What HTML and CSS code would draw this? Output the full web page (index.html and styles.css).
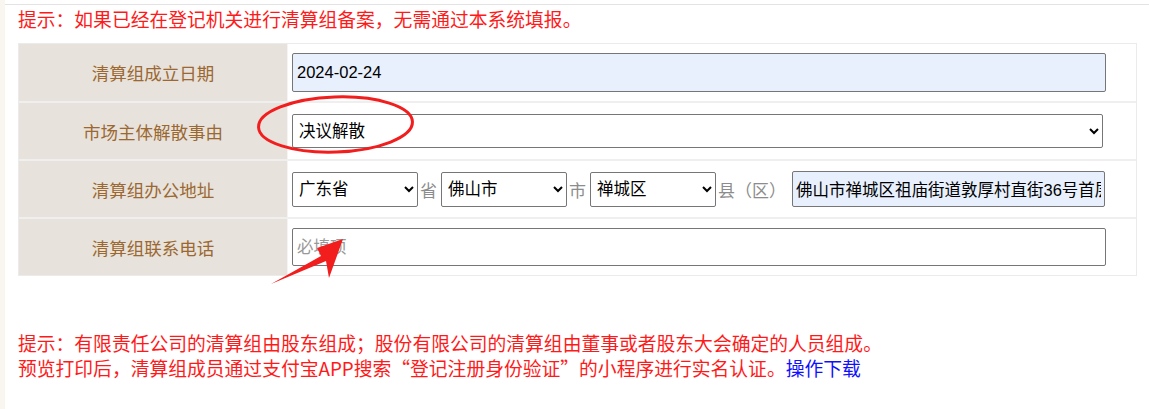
FILE: index.html
```html
<!DOCTYPE html>
<html lang="zh-CN">
<head>
<meta charset="utf-8">
<title>清算组备案</title>
<link rel="stylesheet" href="styles.css">
</head>
<body>
<div class="page">
  <div class="strip"></div>
  <div class="main">
    <p class="tip">提示：如果已经在登记机关进行清算组备案，无需通过本系统填报。</p>
    <table class="form">
      <tr>
        <td class="label">清算组成立日期</td>
        <td class="value"><input class="field filled wide" type="text" value="2024-02-24"></td>
      </tr>
      <tr class="sep">
        <td class="label">市场主体解散事由</td>
        <td class="value"><select class="field sel-wide"><option>决议解散</option></select></td>
      </tr>
      <tr class="sep">
        <td class="label">清算组办公地址</td>
        <td class="value">
          <div class="addr">
            <select class="field sel-small"><option>广东省</option></select>
            <span class="unit">省</span>
            <select class="field sel-small"><option>佛山市</option></select>
            <span class="unit">市</span>
            <select class="field sel-small"><option>禅城区</option></select>
            <span class="unit county">县（区）</span>
            <input class="field filled addr-input" type="text" value="佛山市禅城区祖庙街道敦厚村直街36号首层">
          </div>
        </td>
      </tr>
      <tr class="sep">
        <td class="label">清算组联系电话</td>
        <td class="value"><input class="field wide phone" type="text" placeholder="必填项"></td>
      </tr>
    </table>
    <div class="notes">
      <p>提示：有限责任公司的清算组由股东组成；股份有限公司的清算组由董事或者股东大会确定的人员组成。</p>
      <p>预览打印后，清算组成员通过支付宝APP搜索“登记注册身份验证”的小程序进行实名认证。<a class="dl" href="#">操作下载</a></p>
    </div>
  </div>
  <svg class="marks" width="1149" height="409" viewBox="0 0 1149 409">
    <ellipse cx="335.5" cy="124.5" rx="77" ry="27.5" transform="rotate(-2 335.5 124.5)" fill="none" stroke="#f21d1d" stroke-width="3"/>
    <polygon points="271,284 321,256 317,248 343,239 329,278 326,261" fill="#f21d1d"/>
  </svg>
</div>
</body>
</html>
```
FILE: styles.css
```css
html, body {
  margin: 0;
  padding: 0;
  background: #ffffff;
}
body {
  font-family: "Liberation Sans", "Noto Sans CJK SC", sans-serif;
}
.page {
  position: relative;
  display: flex;
  width: 1149px;
  height: 409px;
  overflow: hidden;
}
.strip {
  width: 5px;
  flex: none;
  background: #f9f6ef;
}
.main {
  flex: 1;
  margin-top: 4px;
  border-top: 1px solid #e3e3e3;
  padding-left: 13px;
}
.tip {
  margin: 0;
  padding-top: 1px;
  font-size: 18.8px;
  line-height: 26px;
  color: #ff1a1a;
  font-family: "Noto Sans CJK SC", sans-serif;
}
.form {
  margin-top: 11px;
  width: 1119px;
  border: 1px solid #ebebeb;
  border-collapse: separate;
  border-spacing: 0;
}
.form td {
  height: 56px;
  padding: 0;
  vertical-align: middle;
}
.form tr:first-child td {
  height: 57px;
}
.form .sep td {
  border-top: 2px solid #efefef;
}
.label {
  width: 268px;
  background: #e8e2dc;
  color: #9a6830;
  text-align: center;
  font-size: 17.5px;
  font-family: "Noto Sans CJK SC", sans-serif;
  border-right: 1px solid #f4f4f4;
}
.value {
  padding-left: 4px !important;
  background: #ffffff;
}
.field {
  box-sizing: border-box;
  border: 1px solid #767676;
  border-radius: 2px;
  font-family: "Liberation Sans", "Noto Sans CJK SC", sans-serif;
  font-size: 16.5px;
  color: #000;
  background: #fff;
  padding: 0 4px;
  margin: 0;
  display: block;
}
.filled {
  background: #e8f0fe;
}
.wide {
  width: 814px;
  height: 39px;
}
.phone {
  height: 38px;
}
.phone::placeholder {
  color: #999;
}
.sel-wide {
  width: 811px;
  height: 34px;
  padding-left: 2px;
}
.addr {
  display: flex;
  align-items: center;
}
.sel-small {
  width: 126px;
  height: 35px;
  padding-left: 2px;
}
.unit {
  color: #8c8c8c;
  font-size: 17px;
  font-family: "Noto Sans CJK SC", sans-serif;
  margin: 0 4px 0 2px;
}
.county {
  margin-right: 6px;
}
.addr-input {
  width: 313px;
  height: 36px;
  padding: 0 3px;
  overflow: hidden;
}
.notes {
  margin-top: 54px;
  font-size: 18.8px;
  line-height: 25px;
  color: #ff1a1a;
  font-family: "Noto Sans CJK SC", sans-serif;
}
.notes p {
  margin: 0;
  white-space: nowrap;
}
.dl {
  color: #1010ff;
  text-decoration: none;
}
.marks {
  position: absolute;
  left: 0;
  top: 0;
  pointer-events: none;
}
```
